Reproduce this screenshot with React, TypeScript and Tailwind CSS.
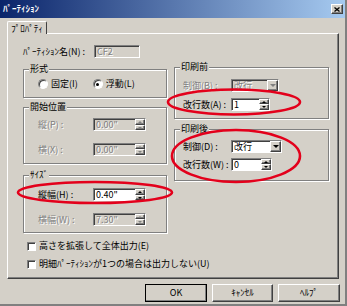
import React from 'react';

const raised =
  'bg-[#d4d0c8] border border-t-white border-l-white border-r-[#404040] border-b-[#404040] shadow-[inset_-1px_-1px_0_#808080]';
const sunken =
  'border border-t-[#808080] border-l-[#808080] border-r-white border-b-white shadow-[inset_1px_1px_0_#404040]';
const grayText = 'text-[#808080] [text-shadow:1px_1px_0_#fff]';

const Arrow = ({ dir, disabled, w = 5, h = 3 }: { dir: 'up' | 'down'; disabled?: boolean; w?: number; h?: number }) => (
  <svg width={w} height={h} viewBox={`0 0 ${w} ${h}`}>
    <polygon
      points={dir === 'up' ? `${w / 2},0 ${w},${h} 0,${h}` : `0,0 ${w},0 ${w / 2},${h}`}
      fill={disabled ? '#808080' : '#000'}
    />
  </svg>
);

const SpinBox = ({ value, disabled, className }: { value: string; disabled?: boolean; className: string }) => (
  <div className={`flex shrink-0 h-[13px] ${sunken} ${disabled ? 'bg-[#d4d0c8]' : 'bg-white'} ${className}`}>
    <span className={`flex-1 pl-[2px] leading-[11px] ${disabled ? grayText : 'text-black'}`}>{value}</span>
    <div className="flex flex-col w-[10px] h-full">
      <div className={`flex-1 flex items-center justify-center ${raised}`}>
        <Arrow dir="up" disabled={disabled} w={4} h={2} />
      </div>
      <div className={`flex-1 flex items-center justify-center ${raised}`}>
        <Arrow dir="down" disabled={disabled} w={4} h={2} />
      </div>
    </div>
  </div>
);

const Combo = ({ value, disabled, className }: { value: string; disabled?: boolean; className: string }) => (
  <div className={`flex shrink-0 h-[13px] ${sunken} ${disabled ? 'bg-[#d4d0c8]' : 'bg-white'} ${className}`}>
    <span className={`flex-1 pl-[2px] leading-[11px] ${disabled ? grayText : 'text-black'}`}>{value}</span>
    <div className={`flex items-center justify-center w-[11px] h-full ${raised}`}>
      <Arrow dir="down" disabled={disabled} w={6} h={3} />
    </div>
  </div>
);

const Group = ({ title, className, children }: { title: string; className: string; children: React.ReactNode }) => (
  <div className={`relative border border-[#808080] shadow-[1px_1px_0_#fff,inset_1px_1px_0_#fff] ${className}`}>
    <span className="absolute -top-[7px] left-[5px] px-[1px] bg-[#d4d0c8] leading-[12px]">{title}</span>
    {children}
  </div>
);

const Radio = ({ checked, label }: { checked?: boolean; label: string }) => (
  <div className="flex items-center">
    <span className="shrink-0 flex items-center justify-center w-[10px] h-[10px] rounded-full bg-white border border-t-[#808080] border-l-[#808080] border-r-white border-b-white shadow-[inset_1px_1px_0_#404040]">
      {checked && <span className="w-[3px] h-[3px] rounded-full bg-black" />}
    </span>
    <span className="ml-[3px] leading-[10px]">{label}</span>
  </div>
);

const Check = ({ label }: { label: string }) => (
  <div className="flex items-center h-[10px] pl-[4px] whitespace-nowrap">
    <span className={`shrink-0 w-[9px] h-[9px] bg-white ${sunken}`} />
    <span className="ml-[3px] leading-[10px]">{label}</span>
  </div>
);

const Btn = ({ label, className }: { label: string; className: string }) => (
  <div className={`flex items-center justify-center h-[18px] ${raised} ${className}`}>{label}</div>
);

export default function App() {
  return (
    <div className="relative w-[347px] h-[306px] bg-[#d4d0c8] border-r-[2px] border-b-[2px] border-[#808080] text-[9px] text-black font-['Noto_Sans_CJK_JP','Noto_Sans',sans-serif] overflow-hidden">
      {/* title bar */}
      <div className="flex items-center h-[18px] bg-[linear-gradient(to_right,#0a246a,#a6caf0)]">
        <span className="pl-[3px] text-white font-bold leading-[12px]">ﾊﾟｰﾃｨｼｮﾝ</span>
        <div className={`ml-auto mr-[2px] flex items-center justify-center w-[12px] h-[10px] ${raised}`}>
          <svg width="6" height="5" viewBox="0 0 6 5">
            <path d="M0.5 0.5 L5.5 4.5 M5.5 0.5 L0.5 4.5" stroke="#000" strokeWidth="1.3" />
          </svg>
        </div>
      </div>

      {/* tab */}
      <div className="relative z-10 ml-[7px] mt-[3px] -mb-[1px] flex items-center justify-center w-[40px] h-[13px] bg-[#d4d0c8] border-t border-l border-r border-t-white border-l-white border-r-[#404040] rounded-t-[2px] leading-[11px]">
        ﾌﾟﾛﾊﾟﾃｨ
      </div>

      {/* panel */}
      <div className="ml-[7px] w-[332px] h-[246px] flex gap-[7px] pl-[15px] pt-[11px] border border-t-white border-l-white border-r-[#404040] border-b-[#404040] shadow-[inset_-1px_-1px_0_#808080]">
        {/* left column */}
        <div className="flex flex-col w-[144px] shrink-0">
          <div className="flex items-center h-[13px]">
            <span className="w-[71px] leading-[11px]">ﾊﾟｰﾃｨｼｮﾝ名(N) :</span>
            <div className={`w-[46px] h-[13px] bg-[#d4d0c8] pl-[2px] leading-[11px] ${sunken} ${grayText}`}>CF2</div>
          </div>

          <Group title="形式" className="mt-[11px] h-[29px]">
            <div className="flex items-center h-[10px] mt-[9px] pl-[14px]">
              <Radio label="固定(I)" />
              <div className="ml-[15px]">
                <Radio checked label="浮動(L)" />
              </div>
            </div>
          </Group>

          <Group title="開始位置" className="mt-[9px] h-[57px]">
            <div className="flex flex-col pl-[14px] pt-[10px] gap-[11px]">
              <div className="flex items-center">
                <span className={`w-[55px] ${grayText}`}>縦(P) :</span>
                <SpinBox value={'0.00"'} disabled className="w-[53px]" />
              </div>
              <div className="flex items-center">
                <span className={`w-[55px] ${grayText}`}>横(X) :</span>
                <SpinBox value={'0.00"'} disabled className="w-[53px]" />
              </div>
            </div>
          </Group>

          <Group title="ｻｲｽﾞ" className="mt-[11px] h-[58px]">
            <div className="flex flex-col pl-[14px] pt-[12px] gap-[11px]">
              <div className="flex items-center">
                <span className="w-[55px]">縦幅(H) :</span>
                <SpinBox value={'0.40"'} className="w-[53px]" />
              </div>
              <div className="flex items-center">
                <span className={`w-[55px] ${grayText}`}>横幅(W) :</span>
                <SpinBox value={'7.30"'} disabled className="w-[53px]" />
              </div>
            </div>
          </Group>

          <div className="mt-[8px]">
            <Check label="高さを拡張して全体出力(E)" />
          </div>
          <div className="mt-[8px]">
            <Check label="明細ﾊﾟｰﾃｨｼｮﾝが1つの場合は出力しない(U)" />
          </div>
        </div>

        {/* right column */}
        <div className="flex flex-col w-[155px] shrink-0">
          <Group title="印刷前" className="mt-[22px] h-[52px]">
            <div className="flex flex-col pl-[8px] pt-[11px] gap-[5px]">
              <div className="flex items-center">
                <span className={`w-[48px] ${grayText}`}>制御(B) :</span>
                <Combo value="改行" disabled className="w-[48px]" />
              </div>
              <div className="flex items-center">
                <span className="w-[48px]">改行数(A) :</span>
                <SpinBox value="1" className="w-[39px]" />
              </div>
            </div>
          </Group>

          <Group title="印刷後" className="mt-[10px] h-[52px]">
            <div className="flex flex-col pl-[8px] pt-[10px] gap-[4px]">
              <div className="flex items-center">
                <span className="w-[48px]">制御(D) :</span>
                <Combo value="改行" className="w-[51px]" />
              </div>
              <div className="flex items-center">
                <span className="w-[48px]">改行数(W) :</span>
                <SpinBox value="0" className="w-[41px]" />
              </div>
            </div>
          </Group>
        </div>
      </div>

      {/* buttons */}
      <div className="flex justify-end gap-[5px] mt-[5px] pr-[5px]">
        <Btn label="OK" className="w-[62px] outline outline-1 outline-black -outline-offset-1" />
        <Btn label="ｷｬﾝｾﾙ" className="w-[61px]" />
        <Btn label="ﾍﾙﾌﾟ" className="w-[62px]" />
      </div>

      {/* red annotation ellipses */}
      <svg className="absolute left-0 top-0 pointer-events-none" width="347" height="306">
        <ellipse cx="234" cy="102" rx="66" ry="12.5" fill="none" stroke="#e3001b" strokeWidth="2.6" />
        <ellipse cx="236" cy="156" rx="64" ry="26" fill="none" stroke="#e3001b" strokeWidth="2.6" />
        <ellipse cx="95" cy="192.5" rx="77" ry="10.5" fill="none" stroke="#e3001b" strokeWidth="2.6" />
      </svg>
    </div>
  );
}
